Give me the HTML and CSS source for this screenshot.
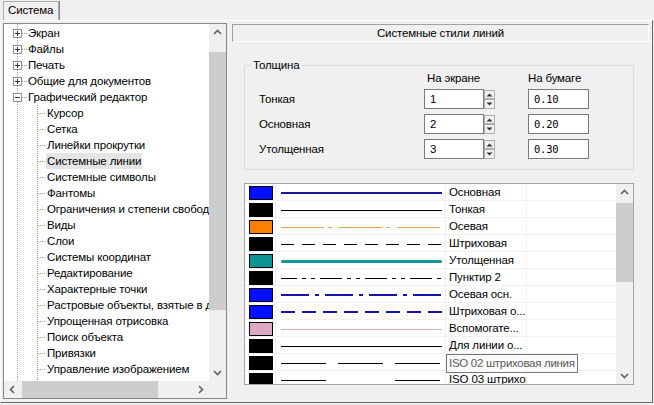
FILE: index.html
```html
<!DOCTYPE html>
<html lang="ru">
<head>
<meta charset="utf-8">
<title>Система</title>
<link rel="stylesheet" href="styles.css">
</head>
<body>
<div class="window">
  <div class="tabs"><div class="tab">Система</div></div>
  <div class="panel">
    <div class="tree">
      <div class="tree-content">
        <div class="row root"><span class="box"><svg width="9" height="9"><rect x="0.5" y="0.5" width="8" height="8" fill="#fff" stroke="#919191"/><path d="M2 4.5h5M4.5 2v5" stroke="#333"/></svg></span><span class="hdots"></span><span class="label">Экран</span></div>
        <div class="row root"><span class="box"><svg width="9" height="9"><rect x="0.5" y="0.5" width="8" height="8" fill="#fff" stroke="#919191"/><path d="M2 4.5h5M4.5 2v5" stroke="#333"/></svg></span><span class="hdots"></span><span class="label">Файлы</span></div>
        <div class="row root"><span class="box"><svg width="9" height="9"><rect x="0.5" y="0.5" width="8" height="8" fill="#fff" stroke="#919191"/><path d="M2 4.5h5M4.5 2v5" stroke="#333"/></svg></span><span class="hdots"></span><span class="label">Печать</span></div>
        <div class="row root"><span class="box"><svg width="9" height="9"><rect x="0.5" y="0.5" width="8" height="8" fill="#fff" stroke="#919191"/><path d="M2 4.5h5M4.5 2v5" stroke="#333"/></svg></span><span class="hdots"></span><span class="label">Общие для документов</span></div>
        <div class="row root"><span class="box"><svg width="9" height="9"><rect x="0.5" y="0.5" width="8" height="8" fill="#fff" stroke="#919191"/><path d="M2 4.5h5" stroke="#333"/></svg></span><span class="hdots"></span><span class="label">Графический редактор</span></div>
        <div class="children">
          <div class="row child"><span class="hdots"></span><span class="label">Курсор</span></div>
          <div class="row child"><span class="hdots"></span><span class="label">Сетка</span></div>
          <div class="row child"><span class="hdots"></span><span class="label">Линейки прокрутки</span></div>
          <div class="row child"><span class="hdots"></span><span class="label sel">Системные линии</span></div>
          <div class="row child"><span class="hdots"></span><span class="label">Системные символы</span></div>
          <div class="row child"><span class="hdots"></span><span class="label">Фантомы</span></div>
          <div class="row child"><span class="hdots"></span><span class="label">Ограничения и степени свободы</span></div>
          <div class="row child"><span class="hdots"></span><span class="label">Виды</span></div>
          <div class="row child"><span class="hdots"></span><span class="label">Слои</span></div>
          <div class="row child"><span class="hdots"></span><span class="label">Системы координат</span></div>
          <div class="row child"><span class="hdots"></span><span class="label">Редактирование</span></div>
          <div class="row child"><span class="hdots"></span><span class="label">Характерные точки</span></div>
          <div class="row child"><span class="hdots"></span><span class="label">Растровые объекты, взятые в документ</span></div>
          <div class="row child"><span class="hdots"></span><span class="label">Упрощенная отрисовка</span></div>
          <div class="row child"><span class="hdots"></span><span class="label">Поиск объекта</span></div>
          <div class="row child"><span class="hdots"></span><span class="label">Привязки</span></div>
          <div class="row child"><span class="hdots"></span><span class="label">Управление изображением</span></div>
          <div class="row child"><span class="hdots"></span><span class="label">Новый вид</span></div>
        </div>
      </div>
      <div class="vscroll tree-v">
        <div class="sbtn"><svg width="17" height="17"><path d="M5 10L8.5 6.5L12 10" fill="none" stroke="#606060" stroke-width="1.6"/></svg></div>
        <div class="track"><div class="thumb"></div></div>
        <div class="sbtn"><svg width="17" height="17"><path d="M5 7L8.5 10.5L12 7" fill="none" stroke="#606060" stroke-width="1.6"/></svg></div>
      </div>
      <div class="hscroll">
        <div class="sbtn"><svg width="17" height="17"><path d="M10 5L6.5 8.5L10 12" fill="none" stroke="#606060" stroke-width="1.6"/></svg></div>
        <div class="htrack"><div class="hthumb"></div></div>
        <div class="sbtn"><svg width="17" height="17"><path d="M7 5L10.5 8.5L7 12" fill="none" stroke="#606060" stroke-width="1.6"/></svg></div>
      </div>
      <div class="corner"></div>
    </div>

    <div class="right">
      <div class="header">Системные стили линий</div>

      <fieldset class="group">
        <legend>Толщина</legend>
        <div class="grid">
          <span></span><span class="colhead screen">На экране</span><span></span><span></span><span class="colhead">На бумаге</span>

          <span class="lbl">Тонкая</span>
          <div class="edit">1</div>
          <div class="spin"><svg width="11" height="19"><rect x="0.5" y="0.5" width="10" height="8" fill="#f0f0f0" stroke="#adadad"/><rect x="0.5" y="9.5" width="10" height="9" fill="#f0f0f0" stroke="#adadad"/><path d="M2.5 6.5h6L5.5 3.5z" fill="#333"/><path d="M2.5 12.5h6L5.5 15.5z" fill="#333"/></svg></div>
          <span></span>
          <div class="edit mono">0.10</div>

          <span class="lbl">Основная</span>
          <div class="edit">2</div>
          <div class="spin"><svg width="11" height="19"><rect x="0.5" y="0.5" width="10" height="8" fill="#f0f0f0" stroke="#adadad"/><rect x="0.5" y="9.5" width="10" height="9" fill="#f0f0f0" stroke="#adadad"/><path d="M2.5 6.5h6L5.5 3.5z" fill="#333"/><path d="M2.5 12.5h6L5.5 15.5z" fill="#333"/></svg></div>
          <span></span>
          <div class="edit mono">0.20</div>

          <span class="lbl">Утолщенная</span>
          <div class="edit">3</div>
          <div class="spin"><svg width="11" height="19"><rect x="0.5" y="0.5" width="10" height="8" fill="#f0f0f0" stroke="#adadad"/><rect x="0.5" y="9.5" width="10" height="9" fill="#f0f0f0" stroke="#adadad"/><path d="M2.5 6.5h6L5.5 3.5z" fill="#333"/><path d="M2.5 12.5h6L5.5 15.5z" fill="#333"/></svg></div>
          <span></span>
          <div class="edit mono">0.30</div>
        </div>
      </fieldset>

      <div class="list">
        <div class="rows">
          <div class="lrow"><div class="sw"><span class="swatch" style="background:#0010ff"></span></div><div class="ln"><svg width="161" height="16"><line x1="0" y1="9" x2="161" y2="9" stroke="#1a1aa0" stroke-width="2"/></svg></div><div class="nm">Основная</div><div></div></div>
          <div class="lrow"><div class="sw"><span class="swatch" style="background:#000"></span></div><div class="ln"><svg width="161" height="16"><line x1="0" y1="9.5" x2="161" y2="9.5" stroke="#000" stroke-width="1"/></svg></div><div class="nm">Тонкая</div><div></div></div>
          <div class="lrow"><div class="sw"><span class="swatch" style="background:#ff8000"></span></div><div class="ln"><svg width="161" height="16"><line x1="0" y1="9.5" x2="161" y2="9.5" stroke="#eea050" stroke-width="1" stroke-dasharray="43 4 4 7"/></svg></div><div class="nm">Осевая</div><div></div></div>
          <div class="lrow"><div class="sw"><span class="swatch" style="background:#000"></span></div><div class="ln"><svg width="161" height="16"><line x1="0" y1="9.5" x2="161" y2="9.5" stroke="#000" stroke-width="1" stroke-dasharray="13 8"/></svg></div><div class="nm">Штриховая</div><div></div></div>
          <div class="lrow"><div class="sw"><span class="swatch" style="background:#0a9494"></span></div><div class="ln"><svg width="161" height="16"><line x1="1.5" y1="9.5" x2="159.5" y2="9.5" stroke="#1a9494" stroke-width="3" stroke-linecap="round"/></svg></div><div class="nm">Утолщенная</div><div></div></div>
          <div class="lrow"><div class="sw"><span class="swatch" style="background:#000"></span></div><div class="ln"><svg width="161" height="16"><line x1="0" y1="9.5" x2="161" y2="9.5" stroke="#000" stroke-width="1" stroke-dasharray="22 5 4 5 4 5" stroke-dashoffset="6"/></svg></div><div class="nm">Пунктир 2</div><div></div></div>
          <div class="lrow"><div class="sw"><span class="swatch" style="background:#0010ff"></span></div><div class="ln"><svg width="161" height="16"><line x1="0" y1="9" x2="161" y2="9" stroke="#1414b0" stroke-width="2" stroke-dasharray="28 6 4 6"/></svg></div><div class="nm">Осевая осн.</div><div></div></div>
          <div class="lrow"><div class="sw"><span class="swatch" style="background:#0010ff"></span></div><div class="ln"><svg width="161" height="16"><line x1="0" y1="9" x2="161" y2="9" stroke="#1414b0" stroke-width="2" stroke-dasharray="14 7"/></svg></div><div class="nm">Штриховая о...</div><div></div></div>
          <div class="lrow"><div class="sw"><span class="swatch" style="background:#dca8c4"></span></div><div class="ln"><svg width="161" height="16"><line x1="0" y1="9.5" x2="161" y2="9.5" stroke="#d4b0c0" stroke-width="1"/></svg></div><div class="nm">Вспомогате...</div><div></div></div>
          <div class="lrow"><div class="sw"><span class="swatch" style="background:#000"></span></div><div class="ln"><svg width="161" height="16"><line x1="0" y1="9.5" x2="161" y2="9.5" stroke="#000" stroke-width="1"/></svg></div><div class="nm">Для линии о...</div><div></div></div>
          <div class="lrow"><div class="sw"><span class="swatch" style="background:#000"></span></div><div class="ln"><svg width="161" height="16"><line x1="0" y1="9.5" x2="161" y2="9.5" stroke="#000" stroke-width="1" stroke-dasharray="45 12"/></svg></div><div class="nm tipcell"><span class="tip">ISO 02 штриховая линия</span></div><div></div></div>
          <div class="lrow"><div class="sw"><span class="swatch" style="background:#000"></span></div><div class="ln"><svg width="161" height="16"><line x1="0" y1="9.5" x2="161" y2="9.5" stroke="#000" stroke-width="1" stroke-dasharray="45 69"/></svg></div><div class="nm">ISO 03 штриховая</div><div></div></div>
        </div>
        <div class="vscroll list-v">
          <div class="sbtn"><svg width="17" height="17"><path d="M5 10L8.5 6.5L12 10" fill="none" stroke="#606060" stroke-width="1.6"/></svg></div>
          <div class="track"><div class="thumb"></div></div>
          <div class="sbtn"><svg width="17" height="17"><path d="M5 7L8.5 10.5L12 7" fill="none" stroke="#606060" stroke-width="1.6"/></svg></div>
        </div>
      </div>
    </div>
  </div>
</div>
</body>
</html>
```

FILE: styles.css
```css
* { box-sizing: border-box; }
html, body { margin: 0; padding: 0; }
body {
  width: 654px;
  height: 405px;
  overflow: hidden;
  background: #f0f0f0;
  color: #000;
  font: 11.5px/16px "Liberation Sans", Arial, sans-serif;
  letter-spacing: -0.15px;
}
.window { display: flex; flex-direction: column; width: 654px; height: 405px; }

/* tab strip */
.tabs { height: 20px; display: flex; padding: 1px 0 0 3px; }
.tab {
  height: 19px;
  padding: 0 5px 0 4px;
  border: 1px solid #adadad;
  border-bottom: none;
  box-shadow: 1px 0 0 #8a8a8a;
  line-height: 17px;
  background: #f0f0f0;
}

/* panel */
.panel {
  display: flex;
  width: 653px;
  height: 383px;
  padding: 2px;
  border: 1px solid;
  border-color: #fff #696969 #696969 #fff;
}

/* tree */
.tree {
  width: 224px;
  height: 376px;
  border: 1px solid #828790;
  background: #fff;
  display: grid;
  grid-template-columns: 205px 17px;
  grid-template-rows: 357px 17px;
}
.tree-content {
  overflow: hidden;
  padding-top: 1px;
  background-image: linear-gradient(to bottom, #a0a0a0 50%, transparent 50%);
  background-size: 1px 2px;
  background-repeat: repeat-y;
  background-position: 13px 0;
}
.row { height: 16px; display: flex; align-items: flex-start; white-space: nowrap; }
.root { padding-left: 9px; }
.box { width: 9px; height: 9px; margin-top: 4px; display: block; }
.box svg { display: block; }
.hdots {
  height: 1px;
  margin-top: 8px;
  background-image: linear-gradient(to right, #a0a0a0 50%, transparent 50%);
  background-size: 2px 1px;
  flex: none;
}
.root .hdots { width: 5px; }
.child .hdots { width: 8px; margin-left: 1px; }
.label { padding: 0 1px; line-height: 16px; }
.label.sel { background: #e5e5e5; }
.children {
  margin-left: 33px;
  background-image: linear-gradient(to bottom, #a0a0a0 50%, transparent 50%);
  background-size: 1px 2px;
  background-repeat: repeat-y;
  background-position: 0 0;
}

/* scrollbars */
.vscroll { display: flex; flex-direction: column; background: #f0f0f0; }
.sbtn { width: 17px; height: 17px; flex: none; }
.sbtn svg { display: block; }
.track { flex: 1; }
.thumb { width: 17px; background: #cdcdcd; }
.tree-v .thumb { margin-top: 11px; height: 258px; }
.list-v .thumb { margin-top: 2px; height: 79px; }
.hscroll { display: flex; background: #f0f0f0; }
.htrack { flex: 1; }
.hthumb { height: 17px; width: 136px; margin-left: 1px; background: #cdcdcd; }
.corner { background: #f0f0f0; }

/* right side */
.right { width: 417px; margin: 1px 0 0 5px; display: flex; flex-direction: column; }
.header {
  height: 18px;
  border: 1px solid;
  border-color: #a0a0a0 #fff #fff #a0a0a0;
  text-align: center;
  line-height: 16px;
}
.group {
  margin: 16px 0 0 12px;
  width: 390px;
  padding: 0 0 10px 14px;
  border: 1px solid #dcdcdc;
  min-width: 0;
}
.group legend {
  margin-left: -8px;
  padding: 0 2px;
  line-height: 14px;
}
.grid {
  display: grid;
  grid-template-columns: 165px 60px 11px 33px 61px;
  grid-template-rows: 12px 20px 20px 20px;
  row-gap: 5px;
  align-items: center;
}
.colhead { line-height: 12px; white-space: nowrap; }
.colhead.screen { padding-left: 3px; }
.lbl { line-height: 16px; }
.edit {
  height: 20px;
  border: 1px solid #7a7a7a;
  background: #fff;
  padding-left: 5px;
  line-height: 18px;
}
.edit.mono {
  font: 10.5px/18px "DejaVu Sans Mono", "Liberation Mono", monospace;
  letter-spacing: -0.2px;
  padding-left: 5px;
}
.spin { height: 19px; }
.spin svg { display: block; }

/* list */
.list {
  margin: 13px 0 0 12px;
  width: 390px;
  height: 202px;
  border: 1px solid #a5a5a5;
  background: #fff;
  display: grid;
  grid-template-columns: 371px 17px;
}
.rows { overflow: hidden; }
.lrow {
  height: 17px;
  display: grid;
  grid-template-columns: 31px 170px 81px 1fr;
  border-bottom: 1px solid #f0f0f0;
}
.sw { border-right: 1px solid #f0f0f0; padding: 2px 0 0 4px; }
.swatch { display: block; width: 24px; height: 14px; border: 1px solid #000; }
.ln { border-right: 1px solid #f0f0f0; padding-left: 5px; }
.ln svg { display: block; }
.nm {
  border-right: 1px solid #f0f0f0;
  padding-left: 3px;
  white-space: nowrap;
  overflow: hidden;
  line-height: 16px;
}
.nm.tipcell { overflow: visible; position: relative; padding: 0; }
.tip {
  position: absolute;
  left: 0;
  top: 0;
  height: 19px;
  padding: 0 2px 0 2px;
  border: 1px solid #767676;
  background: #fafafa;
  color: #5a5a5a;
  line-height: 17px;
  letter-spacing: -0.3px;
  white-space: nowrap;
  z-index: 2;
}
```
